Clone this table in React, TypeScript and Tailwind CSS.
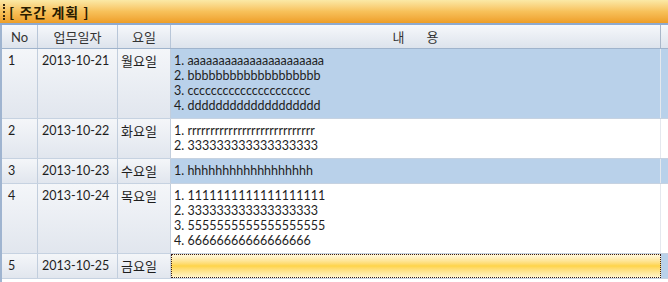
import React from "react";

type Row = { no: number; date: string; day: string; lines: string[]; state: "sel" | "plain" | "focus" };

const rows: Row[] = [
  { no: 1, date: "2013-10-21", day: "월요일", lines: ["1. aaaaaaaaaaaaaaaaaaaaaa", "2. bbbbbbbbbbbbbbbbbbb", "3. ccccccccccccccccccccc", "4. ddddddddddddddddddd"], state: "sel" },
  { no: 2, date: "2013-10-22", day: "화요일", lines: ["1. rrrrrrrrrrrrrrrrrrrrrrrrrrrr", "2. 333333333333333333"], state: "plain" },
  { no: 3, date: "2013-10-23", day: "수요일", lines: ["1. hhhhhhhhhhhhhhhhhh"], state: "sel" },
  { no: 4, date: "2013-10-24", day: "목요일", lines: ["1. 1111111111111111111", "2. 333333333333333333", "3. 5555555555555555555", "4. 66666666666666666"], state: "plain" },
  { no: 5, date: "2013-10-25", day: "금요일", lines: [], state: "focus" },
];

const font = { fontFamily: 'Lato, "Noto Sans CJK KR", sans-serif' };
const cell = "pt-[4px] leading-[15px] bg-gradient-to-b from-[#f4f6f9] to-[#e1e6ee] border-r border-[#c2cedd]";
const ko = { fontFamily: '"Noto Sans CJK KR", sans-serif' };

export default function App() {
  return (
    <div className="w-[668px] h-[282px] bg-white overflow-hidden text-[12.5px] text-[#1e1e1e]" style={font}>
      <div className="h-[25px] flex items-center bg-gradient-to-b from-[#fbe9a6] via-[#f7c15a] to-[#ee9e25] border-b-2 border-[#8eaad0]">
        <div className="ml-[3px] w-[2px] h-[16px] border-l-2 border-dotted border-[#3a2a10]" />
        <span className="ml-[4px] font-bold text-[14px] leading-[16px] tracking-[1px] text-[#2a1c00]" style={ko}>[ 주간 계획 ]</span>
      </div>
      <div className="flex border-l-2 border-[#9fb4d0] h-full">
        <div className="flex-1">
          <div className="flex h-[24px] bg-gradient-to-b from-[#f6f8fb] to-[#dde3ec] border-b border-[#9fb3cc] text-[#333] text-[13px] leading-[16px]">
            <div className="w-[36px] flex items-center justify-center border-r border-[#b8c6d8]">No</div>
            <div className="w-[80px] flex items-center justify-center border-r border-[#b8c6d8]" style={ko}>업무일자</div>
            <div className="w-[53px] flex items-center justify-center border-r border-[#b8c6d8]" style={ko}>요일</div>
            <div className="w-[490px] flex items-center justify-center border-r border-[#a9b7c9] gap-[22px]" style={ko}>
              <span>내</span><span>용</span>
            </div>
            <div className="flex-1" />
          </div>
          {rows.map((r) => (
            <div key={r.no} className="flex border-b border-[#c6d2e1]">
              <div className={`w-[36px] pl-[6px] ${cell}`}>{r.no}</div>
              <div className={`w-[80px] pl-[4px] ${cell}`}>{r.date}</div>
              <div className={`w-[53px] pl-[3px] text-[13px] ${cell}`} style={ko}>{r.day}</div>
              {r.state === "focus" ? (
                <div className="w-[490px] h-[24px] border border-dotted border-[#3a1a1a] bg-gradient-to-b from-[#fff8dc] via-[#fed448] to-[#fff3c6]" />
              ) : (
                <div className={`w-[490px] pl-[3px] pt-[4px] pb-[5px] leading-[15px] border-r border-[#e4e8ee] ${r.state === "sel" ? "bg-[#b9d1ea]" : "bg-white"}`}>
                  {r.lines.map((l) => (
                    <div key={l}>{l}</div>
                  ))}
                </div>
              )}
              <div className={`flex-1 ${r.state === "plain" ? "bg-white" : "bg-[#b9d1ea]"}`} />
            </div>
          ))}
        </div>
      </div>
    </div>
  );
}
